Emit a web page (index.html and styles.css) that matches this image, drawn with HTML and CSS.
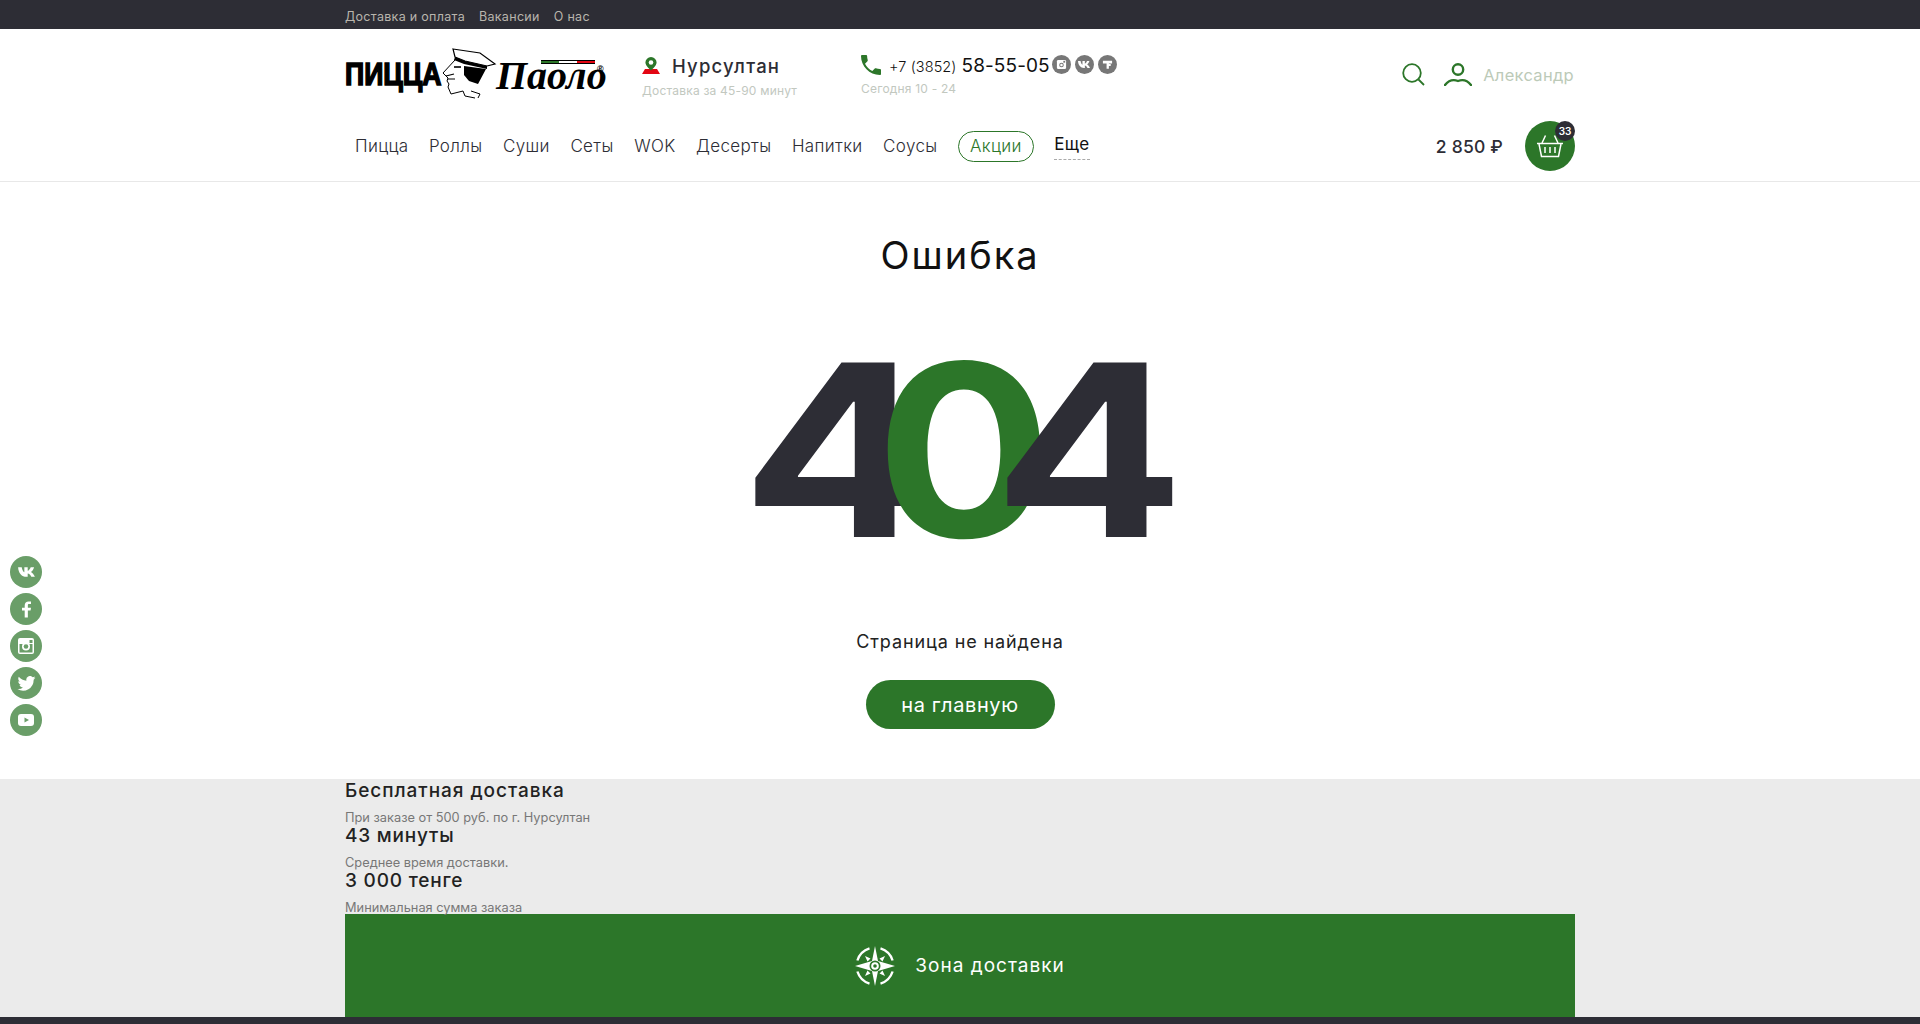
FILE: index.html
```html
<!DOCTYPE html>
<html lang="ru">
<head>
<meta charset="utf-8">
<title>Ошибка 404</title>
<link rel="stylesheet" href="styles.css">
</head>
<body>
<div class="topbar"><div class="wrap topbar-in">
  <a>Доставка и оплата</a><a>Вакансии</a><a>О нас</a>
</div></div>
<header class="header"><div class="wrap">
  <div class="row-main">
    <div class="logo">
      <span class="logo-pizza">ПИЦЦА</span>
      <svg class="logo-face" viewBox="0 0 60 52" width="60" height="52">
        <path d="M13 1 L40 5 L55 16 L47 18 L25 13 L15 9 Z" fill="#fff" stroke="#000" stroke-width="1.2"/>
        <path d="M15 9 L25 13 L47 18 L47 21 L24 16 L14 12 Z" fill="#000"/>
        <path d="M15 12 L3 25 L8 30 L7 33 L9 36 L8 39 L11 46 L23 43 L25 48 L35 50" fill="none" stroke="#000" stroke-width="1"/>
        <path d="M24 18 L46 21 L38 36 L29 33 L24 27 Z" fill="#000"/>
        <path d="M6 28 L14 26 M8 31 L15 31" stroke="#000" stroke-width="1.2"/>
        <path d="M14 19 L21 19" stroke="#000" stroke-width="1.6"/>
        <path d="M31 43 L40 46 L38 50" fill="none" stroke="#000" stroke-width="1"/>
      </svg>
      <span class="logo-paolo">Паоло</span>
      <span class="flag"><i class="flag-g"></i><i class="flag-w"></i><i class="flag-r"></i></span>
      <span class="logo-reg">®</span>
    </div>
    <div class="city">
      <div class="city-top">
        <svg class="pin" viewBox="0 0 18 18" width="18" height="18">
          <path d="M0 17 L3 12 H15 L18 17 Z" fill="#e30613"/>
          <path d="M9 0a5.6 5.6 0 0 1 5.6 5.6C14.600 9 9 13.500 9 13.500S3.400 9 3.400 5.600A5.600 5.600 0 0 1 9 0z" fill="#2c7629"/>
          <circle cx="9" cy="5.500" r="2.300" fill="#fff"/>
        </svg>
        <span class="city-name">Нурсултан</span>
      </div>
      <div class="sub">Доставка за 45-90 минут</div>
    </div>
    <div class="phone">
      <div class="phone-top">
        <svg class="ph-ic" viewBox="3 3 18 18" width="20" height="20"><path fill="#2c7629" d="M6.620 10.790c1.440 2.830 3.760 5.140 6.590 6.590l2.200-2.200c.27-.27.67-.36 1.020-.24 1.120.37 2.330.57 3.570.57.55 0 1 .45 1 1V20c0 .55-.45 1-1 1-9.390 0-17-7.610-17-17 0-.55.45-1 1-1h3.500c.55 0 1 .45 1 1 0 1.250.2 2.450.57 3.570.11.35.03.74-.25 1.020l-2.200 2.200z"/></svg>
        <span class="ph-code">+7 (3852)</span><span class="ph-num">58-55-05</span>
        <span class="mini-socials">
          <span class="mini"><svg viewBox="0 0 12 12" width="11" height="11"><rect x="1" y="1" width="10" height="10" rx="1.500" fill="#fff"/><circle cx="6" cy="6.500" r="2.500" fill="#777"/><circle cx="6" cy="6.500" r="1.400" fill="#fff"/><rect x="8" y="2" width="2" height="2" fill="#777"/></svg></span>
          <span class="mini"><svg viewBox="0 0 14 10" width="12" height="9"><path fill="#fff" d="M0 1h3c.3 2 1.300 4 2.200 4.300V1H8v3c1-.2 2-1.600 2.500-3h2.800c-.4 1.800-1.600 3.300-2.600 3.900C11.800 5.500 13.200 7 14 9h-3c-.6-1.500-1.800-2.600-3-2.800V9H7C3 9 .3 6 0 1z"/></svg></span>
          <span class="mini"><svg viewBox="0 0 12 12" width="11" height="11"><path fill="#fff" d="M1 2h10v3H7.500v5.500H5V5H1zM5.500 5.500h4v2h-4z"/></svg></span>
        </span>
      </div>
      <div class="sub">Сегодня 10 - 24</div>
    </div>
    <div class="user">
      <svg class="search" viewBox="0 0 23 23" width="23" height="23"><circle cx="10" cy="10" r="8.800" fill="none" stroke="#2c7629" stroke-width="1.800"/><path d="M16.500 16.500 L22 22" stroke="#2c7629" stroke-width="1.800" fill="none"/></svg>
      <svg class="person" viewBox="0 0 28 23" width="28" height="23"><circle cx="14" cy="6.500" r="5.200" fill="none" stroke="#2c7629" stroke-width="2.400"/><path d="M1 22 C5 17 9 16 14 18 C19 16 23 17 27 22" fill="none" stroke="#2c7629" stroke-width="2.400" stroke-linecap="round"/></svg>
      <span class="user-name">Александр</span>
    </div>
  </div>
  <div class="row-nav">
    <nav class="nav">
      <a>Пицца</a><a>Роллы</a><a>Суши</a><a>Сеты</a><a>WOK</a><a>Десерты</a><a>Напитки</a><a>Соусы</a>
      <a class="promo">Акции</a><a class="more">Еще</a>
    </nav>
    <div class="cart">
      <span class="price">2 850 ₽</span>
      <span class="basket">
        <svg viewBox="0 0 28 24" width="28" height="24"><g fill="none" stroke="#fff" stroke-width="1.500"><path d="M1 9.500H27"/><path d="M3 10 L5.500 22.500H22.500L25 10"/><path d="M6 9 L9.500 1.500M22 9 L18.500 1.500"/><path d="M9 13v6M14 13v6M19 13v6"/></g></svg>
        <span class="badge">33</span>
      </span>
    </div>
  </div>
</div></header>
<main class="main">
  <h1 class="title">Ошибка</h1>
  <div class="big"><span class="d4">4</span><span class="d0">0</span><span class="d4">4</span></div>
  <p class="notfound">Страница не найдена</p>
  <a class="home">на главную</a>
</main>
<section class="info"><div class="wrap">
  <div class="info-h info-wide">Бесплатная доставка</div>
  <div class="info-s">При заказе от 500 руб. по г. Нурсултан</div>
  <div class="info-h">43 минуты</div>
  <div class="info-s">Среднее время доставки.</div>
  <div class="info-h">3 000 тенге</div>
  <div class="info-s">Минимальная сумма заказа</div>
  <a class="zone">
    <svg viewBox="0 0 40 40" width="40" height="40">
      <g fill="none" stroke="#fff" stroke-width="2.400">
        <path d="M2.400 14.500A18.500 18.500 0 0 1 14.500 2.400M25.500 2.400A18.500 18.500 0 0 1 37.600 14.500M37.600 25.500A18.500 18.500 0 0 1 25.500 37.600M14.500 37.600A18.500 18.500 0 0 1 2.400 25.500"/>
      </g>
      <path fill="#fff" d="M20 0 L23 15 L40 20 L23 25 L20 40 L17 25 L0 20 L17 15Z"/>
      <circle cx="20" cy="20" r="5.500" fill="#2c7629"/><circle cx="20" cy="20" r="3.800" fill="#fff"/><circle cx="20" cy="20" r="1.800" fill="#2c7629"/>
      <path fill="#fff" d="M10 10 L15.500 12.500 L12.500 15.500ZM30 10 L27.500 15.500 L24.500 12.500ZM10 30 L12.500 24.500 L15.500 27.500ZM30 30 L24.500 27.500 L27.500 24.500Z"/>
    </svg>
    <span>Зона доставки</span>
  </a>
</div></section>
<div class="footer"></div>
<aside class="socials">
  <span class="soc"><svg viewBox="0 0 14 10" width="17" height="12"><path fill="#fff" d="M0 1h3c.3 2 1.300 4 2.200 4.300V1H8v3c1-.2 2-1.600 2.500-3h2.800c-.4 1.800-1.600 3.300-2.600 3.900C11.800 5.500 13.200 7 14 9h-3c-.6-1.500-1.800-2.600-3-2.800V9H7C3 9 .3 6 0 1z"/></svg></span>
  <span class="soc"><svg viewBox="0 0 10 18" width="9" height="17"><path fill="#fff" d="M3 18V10H0V7h3V4.500C3 1.500 4.800 0 7.300 0H10v3H8C6.800 3 6.500 3.600 6.500 4.500V7H10l-.5 3h-3v8z"/></svg></span>
  <span class="soc"><svg viewBox="0 0 16 16" width="16" height="16"><rect width="16" height="16" rx="2" fill="#fff"/><rect x="1.500" y="6" width="13" height="8.500" fill="#6a9e68"/><circle cx="8" cy="8.500" r="4" fill="#fff"/><circle cx="8" cy="8.500" r="2.300" fill="#6a9e68"/><rect x="11.500" y="2" width="3" height="3" fill="#6a9e68"/></svg></span>
  <span class="soc"><svg viewBox="0 0 24 20" width="19" height="15"><path fill="#fff" d="M24 2.400c-.9.400-1.800.7-2.800.8 1-.6 1.800-1.600 2.200-2.700-1 .6-2 1-3.100 1.200A4.900 4.900 0 0 0 11.900 6.200C7.800 6 4.200 4 1.700.9c-1.300 2.200-.7 5.100 1.500 6.600-.8 0-1.600-.2-2.200-.6 0 2.300 1.600 4.400 3.900 4.900-.7.200-1.500.2-2.200.1.600 2 2.400 3.400 4.600 3.400A9.900 9.900 0 0 1 0 17.300 14 14 0 0 0 21.500 4.900c1-.7 1.800-1.500 2.500-2.500z"/></svg></span>
  <span class="soc"><svg viewBox="0 0 16 12" width="16" height="12"><rect width="16" height="12" rx="3" fill="#fff"/><path d="M6.500 3.500 L11 6 L6.500 8.500Z" fill="#6a9e68"/></svg></span>
</aside>
</body>
</html>
```
FILE: styles.css
```css
* { box-sizing: border-box; }
html, body { margin: 0; padding: 0; height: 1024px; overflow: hidden; background: #fff; }
body { font-family: Inter, "Noto Sans", sans-serif; color: #2d2d35; position: relative; }
a { color: inherit; text-decoration: none; }
.wrap { width: 1230px; margin-left: 345px; }

.topbar { height: 29px; background: #2d2d35; }
.topbar-in { display: flex; gap: 14px; height: 29px; align-items: center; padding-top: 3px; font-size: 12.500px; letter-spacing: .3px; color: #b9b5ad; font-weight: 400; }

.header { height: 153px; border-bottom: 1px solid #e8e8e8; }
.row-main { display: flex; height: 86px; align-items: flex-start; position: relative; }

.logo { position: relative; width: 262px; height: 52px; margin-top: 19px; display: flex; align-items: flex-start; color: #000; }
.logo-pizza { width: 96px; margin-top: 13px; font: 900 31px/28px "Liberation Sans", sans-serif; -webkit-text-stroke: 1.500px #000; transform: scaleX(.86); transform-origin: left top; white-space: nowrap; }
.logo-face { flex: none; margin-left: -1px; }
.logo-paolo { margin-left: -4px; margin-top: 8px; font: italic 700 40px/40px "Liberation Serif", serif; white-space: nowrap; }
.flag { position: absolute; left: 196px; top: 12px; display: flex; width: 54px; height: 4px; border-top: 1px solid #000; border-bottom: 1px solid #000; }
.flag i { flex: 1; display: block; }
.flag-g { background: #2c7629; }
.flag-w { background: #fff; }
.flag-r { background: #e30613; }
.logo-reg { position: absolute; left: 252px; top: 16px; font: 700 9px/10px "Liberation Sans", sans-serif; }

.city { width: 219px; margin-left: 35px; margin-top: 28px; }
.city-top { display: flex; align-items: center; gap: 12px; height: 18px; }
.pin { flex: none; }
.city-name { font-size: 18.500px; font-weight: 500; letter-spacing: 1.200px; color: #2d2d35; }
.sub { font-size: 12px; line-height: 14px; margin-top: 9px; color: #c2c8bf; letter-spacing: .2px; white-space: nowrap; }

.phone { margin-top: 26px; width: 270px; }
.phone-top { display: flex; align-items: center; height: 20px; }
.ph-ic { flex: none; margin-right: 8px; }
.ph-code { font-size: 14.500px; font-weight: 300; letter-spacing: .1px; color: #111; padding-top: 2px; }
.ph-num { font-size: 19px; font-weight: 400; letter-spacing: .1px; margin-left: 5px; color: #111; padding-top: 1px; }
.mini-socials { display: flex; gap: 4px; margin-left: 2px; margin-top: -2px; }
.mini { width: 19px; height: 19px; border-radius: 50%; background: #777; display: flex; align-items: center; justify-content: center; }
.phone .sub { margin-top: 7px; }

.user { position: absolute; right: 1px; top: 34px; display: flex; align-items: center; }
.search { margin-right: 19px; }
.person { margin-right: 11px; }
.user-name { font-size: 16.500px; letter-spacing: .3px; color: #bccab8; }

.row-nav { display: flex; align-items: center; height: 62px; justify-content: space-between; }
.nav { display: flex; align-items: center; padding-left: 10px; font-size: 17px; font-weight: 300; letter-spacing: .35px; color: #2d2d35; }
.nav a { margin-right: 20.500px; white-space: nowrap; }
.nav .promo { height: 31px; padding: 0 11px; line-height: 29px; border: 1px solid #2c7629; border-radius: 16px; color: #2c7629; }
.nav .more { padding-bottom: 5px; margin-top: 1px; border-bottom: 1px dashed #aaa; color: #111; font-weight: 400; }

.cart { display: flex; align-items: center; gap: 22px; }
.price { font-size: 17.500px; font-weight: 500; letter-spacing: .2px; }
.basket { position: relative; width: 50px; height: 50px; border-radius: 50%; background: #2c7629; display: flex; align-items: center; justify-content: center; }
.badge { position: absolute; right: 0; top: 0; width: 20px; height: 20px; border-radius: 50%; background: #2d2d35; color: #fff; font-size: 10px; font-weight: 600; line-height: 20px; text-align: center; }

.main { height: 597px; display: flex; flex-direction: column; align-items: center; }
.title { margin: 50px 0 0; font-size: 38px; line-height: 46px; font-weight: 400; letter-spacing: 2px; color: #111; }
.big { display: flex; margin-top: 52px; margin-left: 7px; height: 240px; line-height: 240px; font-size: 240px; font-weight: 700; color: #2d2d35; }
.d4 { display: block; transform: scaleX(1.18); }
.d0 { display: block; color: #2c7629; margin: 0 -36px; transform: scaleX(1.09); }
.notfound { margin: 60px 0 0; font-size: 18px; line-height: 24px; letter-spacing: .9px; color: #222; }
.home { margin-top: 26px; width: 189px; height: 49px; border-radius: 25px; background: #2c7629; color: #fff; font-size: 20px; letter-spacing: .6px; display: flex; align-items: center; justify-content: center; }

.info { height: 238px; background: #ebebeb; overflow: hidden; }
.info-h { font-size: 19px; line-height: 24px; letter-spacing: .8px; font-weight: 500; color: #222; }
.info-wide { letter-spacing: .95px; }
.info-s { font-size: 12.800px; line-height: 14px; margin-top: 8px; margin-bottom: -1px; color: #777; white-space: nowrap; }
.zone { display: flex; align-items: center; justify-content: center; gap: 20px; width: 1230px; height: 103px; background: #2c7629; color: #fff; font-size: 19px; letter-spacing: 1px; }

.footer { height: 7px; background: #2d2d35; }

.socials { position: absolute; left: 10px; top: 556px; display: flex; flex-direction: column; gap: 5px; }
.soc { width: 32px; height: 32px; border-radius: 50%; background: #6a9e68; display: flex; align-items: center; justify-content: center; }
```
